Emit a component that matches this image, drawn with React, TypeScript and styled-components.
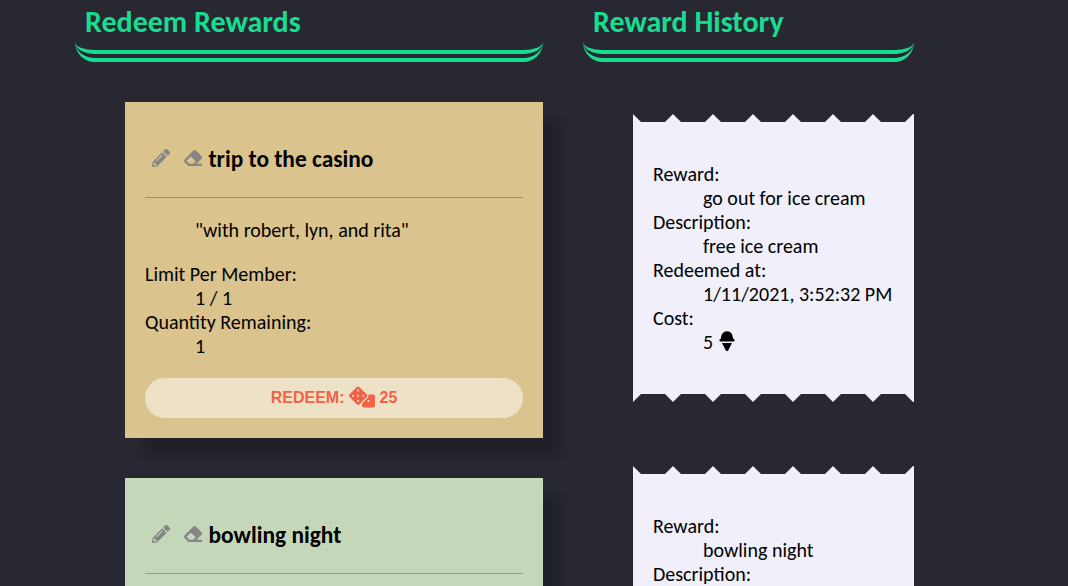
import React from "react";
import styled, { createGlobalStyle } from "styled-components";
import { FaPencilAlt, FaEraser, FaDice } from "react-icons/fa";

const GlobalStyle = createGlobalStyle`
  * { box-sizing: border-box; }
  html, body { margin: 0; height: 586px; overflow: hidden; background: #282832; }
  body { font-family: Calibri, Carlito, Lato, sans-serif; font-size: 20px; line-height: 24px; color: #000; }
`;

const TOOTH = 8;
const PITCH = 40;
const TICKET_WIDTH = 281;
const TICKET_HEIGHT = 288;

function ticketOutline() {
  const top: string[] = [];
  const bottom: string[] = [];
  for (let x = 0; x <= TICKET_WIDTH; x += PITCH) {
    for (const [dx, dy] of [[-TOOTH, TOOTH], [0, 0], [TOOTH, TOOTH]]) {
      if (x + dx < 0 || x + dx > TICKET_WIDTH) continue;
      top.push(`${x + dx}px ${dy}px`);
      bottom.unshift(`${x + dx}px ${TICKET_HEIGHT - dy}px`);
    }
  }
  top.push(`${TICKET_WIDTH}px 0px`);
  bottom.unshift(`${TICKET_WIDTH}px ${TICKET_HEIGHT}px`);
  return `polygon(${[...top, ...bottom].join(", ")})`;
}

const Page = styled.main`
  display: flex;
  align-items: flex-start;
  gap: 40px;
  width: 1068px;
  height: 586px;
  padding-left: 75px;
  overflow: hidden;
`;

const Column = styled.section<{ $width: number }>`
  flex: none;
  width: ${(p) => p.$width}px;
`;

const Heading = styled.h2`
  height: 62px;
  margin: 0;
  padding: 4px 10px 0;
  border-bottom: 12px double #17dd93;
  border-radius: 0 0 20px 20px;
  color: #17dd93;
  font-size: 30px;
  font-weight: 700;
  line-height: 36px;
  white-space: nowrap;
`;

const Cards = styled.div`
  display: flex;
  flex-direction: column;
  gap: 40px;
  padding: 40px 0 0 50px;
`;

const Card = styled.article<{ $color: string }>`
  height: 336px;
  padding: 20px;
  background: ${(p) => p.$color};
  box-shadow: 18px 18px 8px rgba(0, 0, 0, 0.18);
`;

const CardTitle = styled.header`
  display: flex;
  align-items: center;
  height: 76px;
  padding: 0 0 2px 7px;
  border-bottom: 1px solid rgba(0, 0, 0, 0.26);
  color: #858585;
  svg { flex: none; margin-bottom: 2px; }
  svg + svg { margin-left: 14px; }
`;

const Name = styled.h3`
  margin: 0 0 0 6.5px;
  color: #000;
  font-size: 23.4px;
  font-weight: 700;
`;

const Quote = styled.p`
  margin: 20px 0 20px 50px;
`;

const Details = styled.dl`
  margin: 0;
  white-space: nowrap;
  dd { margin: 0 0 0 50px; }
`;

const Redeem = styled.button`
  display: flex;
  align-items: center;
  justify-content: center;
  gap: 4px;
  width: 100%;
  height: 40px;
  margin-top: 20px;
  border: 0;
  border-radius: 20px;
  background: #ede1c6;
  color: #f16247;
  font: 700 16px "Liberation Sans", sans-serif;
  svg { margin: 0 0 3px 1px; }
`;

const Tickets = styled.div`
  display: flex;
  flex-direction: column;
  gap: 64px;
  padding: 52px 0 0 50px;
`;

const Ticket = styled.article`
  width: ${TICKET_WIDTH}px;
  height: ${TICKET_HEIGHT}px;
  padding: 48px 20px;
  background: #f0effa;
  clip-path: ${ticketOutline()};
`;

const Cost = styled.dd`
  display: flex;
  gap: 6px;
  svg { margin-top: 1px; }
`;

const IceCream = () => (
  <svg width="16" height="20" viewBox="0 0 16 20" fill="currentColor">
    <path d="M.4 9.5c0-.9.5-1.5 1.6-2C2.2 3.2 4.2.2 8 .2s5.8 3 6 7.3c1.1.5 1.6 1.1 1.6 2 0 .6-.4.9-1 .9H1.4c-.6 0-1-.3-1-.9z" />
    <path d="M3 12h10L8.9 19.9H7.1z" />
  </svg>
);

interface RewardProps {
  name: string;
  color: string;
  children?: React.ReactNode;
}

function Reward({ name, color, children }: RewardProps) {
  return (
    <Card $color={color}>
      <CardTitle>
        <FaPencilAlt size={18} />
        <FaEraser size={18} />
        <Name>{name}</Name>
      </CardTitle>
      {children}
    </Card>
  );
}

export default function App() {
  return (
    <>
      <GlobalStyle />
      <Page>
        <Column $width={468}>
          <Heading>Redeem Rewards</Heading>
          <Cards>
            <Reward name="trip to the casino" color="#dac38d">
              <Quote>"with robert, lyn, and rita"</Quote>
              <Details>
                <dt>Limit Per Member:</dt>
                <dd>1 / 1</dd>
                <dt>Quantity Remaining:</dt>
                <dd>1</dd>
              </Details>
              <Redeem>REDEEM: <FaDice size={26} /> 25</Redeem>
            </Reward>
            <Reward name="bowling night" color="#c4d8b9" />
          </Cards>
        </Column>
        <Column $width={331}>
          <Heading>Reward History</Heading>
          <Tickets>
            <Ticket>
              <Details>
                <dt>Reward:</dt>
                <dd>go out for ice cream</dd>
                <dt>Description:</dt>
                <dd>free ice cream</dd>
                <dt>Redeemed at:</dt>
                <dd>1/11/2021, 3:52:32 PM</dd>
                <dt>Cost:</dt>
                <Cost>5 <IceCream /></Cost>
              </Details>
            </Ticket>
            <Ticket>
              <Details>
                <dt>Reward:</dt>
                <dd>bowling night</dd>
                <dt>Description:</dt>
              </Details>
            </Ticket>
          </Tickets>
        </Column>
      </Page>
    </>
  );
}
